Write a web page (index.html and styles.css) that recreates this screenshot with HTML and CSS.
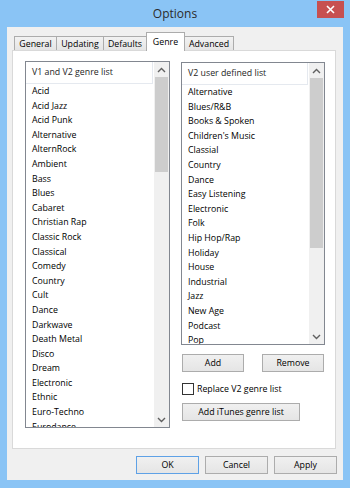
FILE: index.html
```html
<!DOCTYPE html>
<html lang="en">
<head>
    <meta charset="UTF-8">
    <meta name="viewport" content="width=device-width, initial-scale=1.0">
    <title>Options</title>
    <link rel="stylesheet" href="styles.css">
</head>
<body>

    <div class="window">
        <!-- Title bar -->
        <div class="titlebar">
            <span></span>
            <span class="title">Options</span>
            <button class="close" aria-label="Close">
                <svg width="9" height="9" viewBox="0 0 9 9"><path d="M1 1L8 8M8 1L1 8" stroke="#fff" stroke-width="1.6" fill="none"/></svg>
            </button>
        </div>

        <div class="client">
            <!-- Tabs -->
            <div class="tabs">
                <div class="tab tab-general">General</div>
                <div class="tab tab-updating">Updating</div>
                <div class="tab tab-defaults">Defaults</div>
                <div class="tab tab-genre selected">Genre</div>
                <div class="tab tab-advanced">Advanced</div>
            </div>

            <div class="panel">
                <!-- Left list -->
                <div class="listbox list-left">
                    <div class="list-main">
                        <div class="list-head">V1 and V2 genre list</div>
                        <ul class="list-items">
                            <li>Acid</li>
                            <li>Acid Jazz</li>
                            <li>Acid Punk</li>
                            <li>Alternative</li>
                            <li>AlternRock</li>
                            <li>Ambient</li>
                            <li>Bass</li>
                            <li>Blues</li>
                            <li>Cabaret</li>
                            <li>Christian Rap</li>
                            <li>Classic Rock</li>
                            <li>Classical</li>
                            <li>Comedy</li>
                            <li>Country</li>
                            <li>Cult</li>
                            <li>Dance</li>
                            <li>Darkwave</li>
                            <li>Death Metal</li>
                            <li>Disco</li>
                            <li>Dream</li>
                            <li>Electronic</li>
                            <li>Ethnic</li>
                            <li>Euro-Techno</li>
                            <li>Eurodance</li>
                        </ul>
                    </div>
                    <div class="scrollbar">
                        <div class="sb-btn"><svg width="9" height="6" viewBox="0 0 9 6"><path d="M1 5L4.5 1.5L8 5" stroke="#606060" stroke-width="1.4" fill="none"/></svg></div>
                        <div class="thumb thumb-left"></div>
                        <div class="sb-space"></div>
                        <div class="sb-btn"><svg width="9" height="6" viewBox="0 0 9 6"><path d="M1 1L4.5 4.5L8 1" stroke="#606060" stroke-width="1.4" fill="none"/></svg></div>
                    </div>
                </div>

                <!-- Right side -->
                <div class="side">
                    <div class="listbox list-right">
                        <div class="list-main">
                            <div class="list-head">V2 user defined list</div>
                            <ul class="list-items">
                                <li>Alternative</li>
                                <li>Blues/R&amp;B</li>
                                <li>Books &amp; Spoken</li>
                                <li>Children's Music</li>
                                <li>Classial</li>
                                <li>Country</li>
                                <li>Dance</li>
                                <li>Easy Listening</li>
                                <li>Electronic</li>
                                <li>Folk</li>
                                <li>Hip Hop/Rap</li>
                                <li>Holiday</li>
                                <li>House</li>
                                <li>Industrial</li>
                                <li>Jazz</li>
                                <li>New Age</li>
                                <li>Podcast</li>
                                <li>Pop</li>
                            </ul>
                        </div>
                        <div class="scrollbar">
                            <div class="sb-btn"><svg width="9" height="6" viewBox="0 0 9 6"><path d="M1 5L4.5 1.5L8 5" stroke="#606060" stroke-width="1.4" fill="none"/></svg></div>
                            <div class="thumb thumb-right"></div>
                            <div class="sb-space"></div>
                            <div class="sb-btn"><svg width="9" height="6" viewBox="0 0 9 6"><path d="M1 1L4.5 4.5L8 1" stroke="#606060" stroke-width="1.4" fill="none"/></svg></div>
                        </div>
                    </div>

                    <div class="btn-row">
                        <button class="btn">Add</button>
                        <button class="btn">Remove</button>
                    </div>

                    <label class="check">
                        <input type="checkbox">
                        <span>Replace V2 genre list</span>
                    </label>

                    <button class="btn btn-itunes">Add iTunes genre list</button>
                </div>
            </div>

            <!-- Dialog buttons -->
            <div class="footer">
                <button class="btn btn-wide btn-default">OK</button>
                <button class="btn btn-wide">Cancel</button>
                <button class="btn btn-wide">Apply</button>
            </div>
        </div>
    </div>

</body>
</html>
```

FILE: styles.css
```css
body {
    margin: 0;
    font-family: "Open Sans", "Noto Sans", sans-serif;
    font-size: 8.8px;
    color: #000;
}
.window {
    width: 350px;
    height: 488px;
    box-sizing: border-box;
    background: #8ac4f5;
    padding: 0 7px 8px;
    display: flex;
    flex-direction: column;
}

/* title bar */
.titlebar {
    height: 27px;
    margin: 0 -7px;
    display: grid;
    grid-template-columns: 1fr auto 1fr;
    align-items: start;
}
.title { font-size: 12px; line-height: 27px; color: #2b2b2b; }
.close {
    justify-self: end;
    width: 27px;
    height: 17px;
    margin: 1px 6px 0 0;
    padding: 0;
    border: 0;
    background: #c75050;
    display: flex;
    align-items: center;
    justify-content: center;
}

/* client area */
.client {
    flex: 1;
    background: #f0f0f0;
    padding: 5px 0 0 5px;
    display: flex;
    flex-direction: column;
}

/* tabs */
.tabs {
    height: 18px;
    padding-left: 2px;
    display: flex;
    align-items: flex-end;
    position: relative;
    z-index: 1;
}
.tab {
    height: 14px;
    box-sizing: border-box;
    border: 1px solid #acacac;
    border-bottom: 0;
    margin-left: -1px;
    background: linear-gradient(#f2f2f2, #e5e5e5);
    display: flex;
    align-items: center;
    justify-content: center;
    white-space: nowrap;
}
.tab-general { width: 43px; margin-left: 0; }
.tab-updating { width: 48px; }
.tab-defaults { width: 44px; }
.tab-genre { width: 39px; }
.tab-advanced { width: 50px; }
.tab.selected {
    height: 19px;
    margin-bottom: -1px;
    background: #fff;
    position: relative;
    z-index: 2;
    padding-bottom: 1px;
}

/* tab page */
.panel {
    height: 399px;
    box-sizing: border-box;
    margin-right: 7px;
    background: #fff;
    border: 1px solid #d9d9d9;
    padding: 10px 10px 0 12px;
    display: flex;
    gap: 11px;
    align-items: flex-start;
}

/* list boxes */
.listbox {
    box-sizing: border-box;
    border: 1px solid #828790;
    background: #fff;
    display: grid;
    grid-template-columns: 1fr 15px;
    overflow: hidden;
}
.list-left { width: 145px; height: 367px; }
.list-right { width: 144px; height: 283px; }
.list-main { min-width: 0; overflow: hidden; }
.list-head {
    height: 21px;
    line-height: 21px;
    padding-left: 6px;
    margin-right: 1px;
    border-bottom: 1px solid #e5e9ef;
    border-right: 1px solid #e5e9ef;
    color: #1e1e1e;
    white-space: nowrap;
}
.list-items { list-style: none; margin: 0; padding: 0 0 0 6px; }
.list-items li { line-height: 14.6px; white-space: nowrap; }

/* scroll bars */
.scrollbar {
    background: #f0f0f0;
    display: flex;
    flex-direction: column;
}
.sb-btn {
    height: 15px;
    flex: none;
    display: flex;
    align-items: center;
    justify-content: center;
}
.thumb { margin: 0 1px; background: #cdcdcd; flex: none; }
.thumb-left { height: 95px; }
.thumb-right { height: 170px; }
.sb-space { flex: 1; }

/* right column */
.side {
    width: 144px;
    padding-top: 1px;
    display: flex;
    flex-direction: column;
}
.btn-row {
    margin-top: 9px;
    padding: 0 1px;
    display: flex;
    justify-content: space-between;
}
.btn {
    width: 62px;
    height: 18px;
    box-sizing: border-box;
    padding: 0;
    border: 1px solid #acacac;
    background: linear-gradient(#f0f0f0, #e5e5e5);
    font: inherit;
    color: #000;
}
.check {
    margin: 11px 0 0 1px;
    display: flex;
    align-items: center;
    gap: 3px;
}
.check input {
    appearance: none;
    width: 12px;
    height: 12px;
    margin: 0;
    box-sizing: border-box;
    border: 1px solid #333;
    background: #fff;
}
.btn-itunes { width: 118px; margin: 8px 0 0 1px; }

/* dialog buttons */
.footer {
    margin-top: 7px;
    padding-right: 6px;
    display: flex;
    justify-content: flex-end;
    gap: 6px;
}
.btn-wide { width: 63px; }
.btn-default { border-color: #5ea1e6; }
```
